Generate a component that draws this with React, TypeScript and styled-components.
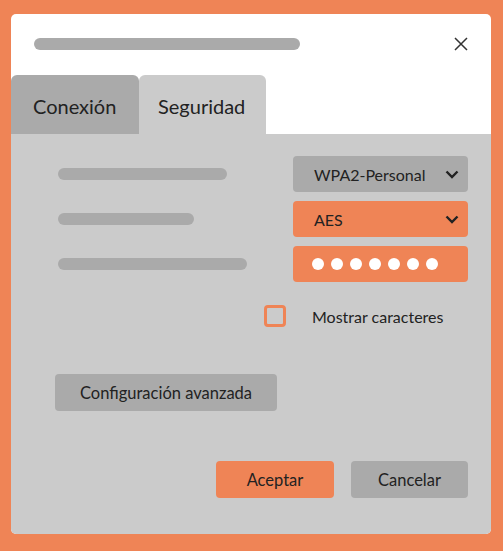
import React from "react";
import styled, { createGlobalStyle } from "styled-components";

const ORANGE = "#ef8456";
const DARK = "#aaaaaa";
const LIGHT = "#cbcbcb";
const TEXT = "#222222";

const Global = createGlobalStyle`
  html, body { margin: 0; padding: 0; }
  body {
    background: ${ORANGE};
    font-family: Lato, "Open Sans", sans-serif;
    color: ${TEXT};
  }
`;

const Page = styled.div`
  width: 503px;
  height: 551px;
  padding: 14px 0 0 11px;
  box-sizing: border-box;
`;

const Dialog = styled.div`
  width: 480px;
  height: 520px;
  background: #ffffff;
  border-radius: 5px;
  overflow: hidden;
  display: flex;
  flex-direction: column;
`;

const Header = styled.div`
  height: 61px;
  display: flex;
  align-items: flex-start;
  justify-content: space-between;
  padding: 24px 23px 0 23px;
  box-sizing: border-box;
`;

const Bar = styled.div<{ $w: number }>`
  width: ${(p) => p.$w}px;
  height: 12px;
  border-radius: 6px;
  background: ${DARK};
  flex: none;
`;

const Close = styled.button`
  border: none;
  background: none;
  padding: 0;
  margin-top: -1px;
  width: 14px;
  height: 14px;
  display: flex;
  cursor: pointer;
`;

const Tabs = styled.div`
  display: flex;
  height: 59px;
`;

const Tab = styled.div<{ $active?: boolean; $w: number }>`
  width: ${(p) => p.$w}px;
  background: ${(p) => (p.$active ? LIGHT : DARK)};
  border-radius: 6px 6px 0 0;
  font-size: 20px;
  display: flex;
  align-items: center;
  padding-left: ${(p) => (p.$active ? 19 : 22)}px;
  padding-top: 3px;
  box-sizing: border-box;
  color: ${TEXT};
`;

const Panel = styled.div`
  flex: 1;
  background: ${LIGHT};
  padding: 22px 23px 0 0;
  display: flex;
  flex-direction: column;
`;

const Rows = styled.div`
  display: flex;
  flex-direction: column;
  gap: 9px;
`;

const Row = styled.div`
  display: flex;
  align-items: center;
  justify-content: space-between;
  padding-left: 47px;
`;

const Field = styled.div<{ $bg: string }>`
  width: 175px;
  height: 36px;
  border-radius: 4px;
  background: ${(p) => p.$bg};
  display: flex;
  align-items: center;
  justify-content: space-between;
  padding: 0 9px 0 21px;
  box-sizing: border-box;
  font-size: 16px;
  color: ${TEXT};
`;

const Dots = styled.div`
  display: flex;
  gap: 7px;
  margin-left: -2px;
`;

const Dot = styled.span`
  width: 12px;
  height: 12px;
  border-radius: 50%;
  background: #ffffff;
`;

const CheckRow = styled.label`
  display: flex;
  align-items: center;
  gap: 26px;
  height: 22px;
  margin: 23px 0 0 253px;
  font-size: 16px;
`;

const Box = styled.span`
  width: 22px;
  height: 22px;
  border: 3px solid ${ORANGE};
  border-radius: 4px;
  box-sizing: border-box;
`;

const Button = styled.button<{ $bg: string; $w: number }>`
  width: ${(p) => p.$w}px;
  height: 37px;
  border: none;
  border-radius: 4px;
  background: ${(p) => p.$bg};
  font-family: Lato, "Open Sans", sans-serif;
  font-size: 16.5px;
  color: ${TEXT};
  padding: 0;
  cursor: pointer;
`;

const AdvancedWrap = styled.div`
  margin: 47px 0 0 44px;
  display: flex;
`;

const Footer = styled.div`
  display: flex;
  justify-content: flex-end;
  gap: 17px;
  margin-top: 50px;
`;

const Chevron = () => (
  <svg width="14" height="9" viewBox="0 0 14 9">
    <path d="M1.5 1.5 L7 7 L12.5 1.5" fill="none" stroke="#222" strokeWidth="2.4" />
  </svg>
);

export default function App() {
  return (
    <>
      <Global />
      <Page>
        <Dialog>
          <Header>
            <Bar $w={266} />
            <Close aria-label="Cerrar">
              <svg width="14" height="14" viewBox="0 0 14 14">
                <path d="M1 1 L13 13 M13 1 L1 13" stroke="#333" strokeWidth="1.5" />
              </svg>
            </Close>
          </Header>
          <Tabs>
            <Tab $w={128}>Conexión</Tab>
            <Tab $w={127} $active>
              Seguridad
            </Tab>
          </Tabs>
          <Panel>
            <Rows>
              <Row>
                <Bar $w={169} />
                <Field $bg={DARK}>
                  WPA2-Personal
                  <Chevron />
                </Field>
              </Row>
              <Row>
                <Bar $w={136} />
                <Field $bg={ORANGE}>
                  AES
                  <Chevron />
                </Field>
              </Row>
              <Row>
                <Bar $w={189} />
                <Field $bg={ORANGE}>
                  <Dots>
                    {Array.from({ length: 7 }).map((_, i) => (
                      <Dot key={i} />
                    ))}
                  </Dots>
                </Field>
              </Row>
            </Rows>
            <CheckRow>
              <Box />
              Mostrar caracteres
            </CheckRow>
            <AdvancedWrap>
              <Button $bg={DARK} $w={222}>
                Configuración avanzada
              </Button>
            </AdvancedWrap>
            <Footer>
              <Button $bg={ORANGE} $w={118}>
                Aceptar
              </Button>
              <Button $bg={DARK} $w={117}>
                Cancelar
              </Button>
            </Footer>
          </Panel>
        </Dialog>
      </Page>
    </>
  );
}
